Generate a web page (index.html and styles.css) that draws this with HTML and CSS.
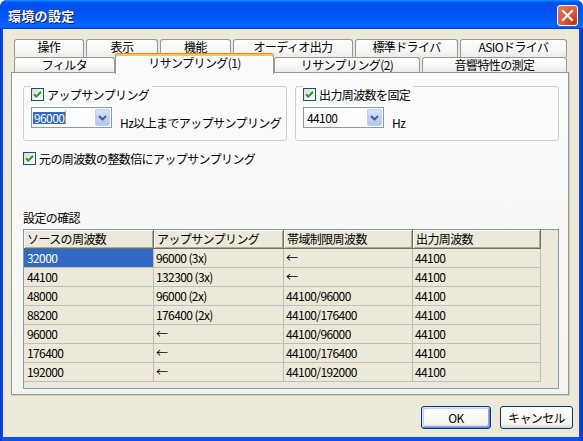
FILE: index.html
```html
<!DOCTYPE html>
<html lang="ja">
<head>
  <meta charset="UTF-8">
  <title>環境の設定</title>
  <link rel="stylesheet" href="styles.css">
</head>
<body>

<div class="window">
  <!-- title bar -->
  <div class="titlebar">
    <span class="title">環境の設定</span>
    <span class="close">
      <svg width="19" height="19" viewBox="0 0 19 19"><path d="M5 5 L14 14 M14 5 L5 14" stroke="#fff" stroke-width="2.2" stroke-linecap="square"/></svg>
    </span>
  </div>

  <div class="client">
    <!-- tabs, two rows -->
    <div class="tabs">
      <div class="tabrow">
        <div class="tab w70">操作</div>
        <div class="tab w72">表示</div>
        <div class="tab w71">機能</div>
        <div class="tab w120">オーディオ出力</div>
        <div class="tab w103">標準ドライバ</div>
        <div class="tab w107">ASIOドライバ</div>
      </div>
      <div class="tabrow row2">
        <div class="tab w101">フィルタ</div>
        <div class="tab sel w159">リサンプリング(1)</div>
        <div class="tab w146">リサンプリング(2)</div>
        <div class="tab w145 gapl">音響特性の測定</div>
      </div>
    </div>

    <div class="panel">
      <div class="groups">
        <div class="group">
          <div class="legend">
            <span class="cb"><svg width="11" height="11" viewBox="0 0 11 11"><path d="M2 5.2 L4.3 7.6 L9 2.8" fill="none" stroke="#21A121" stroke-width="2"/></svg></span>
            <span>アップサンプリング</span>
          </div>
          <div class="field">
            <div class="combo">
              <span class="val"><span class="hl">96000</span><span class="caret"></span></span>
              <span class="drop"><svg width="9" height="6" viewBox="0 0 9 6"><path d="M1 1 L4.5 4.5 L8 1" fill="none" stroke="#4D6185" stroke-width="2"/></svg></span>
            </div>
            <span class="hz">Hz以上までアップサンプリング</span>
          </div>
        </div>
        <div class="group">
          <div class="legend">
            <span class="cb"><svg width="11" height="11" viewBox="0 0 11 11"><path d="M2 5.2 L4.3 7.6 L9 2.8" fill="none" stroke="#21A121" stroke-width="2"/></svg></span>
            <span>出力周波数を固定</span>
          </div>
          <div class="field">
            <div class="combo">
              <span class="val plain">44100</span>
              <span class="drop"><svg width="9" height="6" viewBox="0 0 9 6"><path d="M1 1 L4.5 4.5 L8 1" fill="none" stroke="#4D6185" stroke-width="2"/></svg></span>
            </div>
            <span class="hz">Hz</span>
          </div>
        </div>
      </div>

      <div class="check-row">
        <span class="cb"><svg width="11" height="11" viewBox="0 0 11 11"><path d="M2 5.2 L4.3 7.6 L9 2.8" fill="none" stroke="#21A121" stroke-width="2"/></svg></span>
        <span>元の周波数の整数倍にアップサンプリング</span>
      </div>

      <div class="caption">設定の確認</div>

      <div class="listview">
        <table>
          <thead>
            <tr><th class="c1">ソースの周波数</th><th class="c2">アップサンプリング</th><th class="c3">帯域制限周波数</th><th class="c4">出力周波数</th></tr>
          </thead>
          <tbody>
            <tr><td class="picked">32000</td><td>96000 (3x)</td><td>←</td><td>44100</td></tr>
            <tr><td>44100</td><td>132300 (3x)</td><td>←</td><td>44100</td></tr>
            <tr><td>48000</td><td>96000 (2x)</td><td>44100/96000</td><td>44100</td></tr>
            <tr><td>88200</td><td>176400 (2x)</td><td>44100/176400</td><td>44100</td></tr>
            <tr><td>96000</td><td>←</td><td>44100/96000</td><td>44100</td></tr>
            <tr><td>176400</td><td>←</td><td>44100/176400</td><td>44100</td></tr>
            <tr><td>192000</td><td>←</td><td>44100/192000</td><td>44100</td></tr>
          </tbody>
        </table>
      </div>
    </div>

    <div class="buttons">
      <button class="btn ok">OK</button>
      <button class="btn cancel">キャンセル</button>
    </div>
  </div>
</div>

</body>
</html>
```

FILE: styles.css
```css
* { box-sizing: border-box; }
body { margin: 0; background: #fff; font-family: "Noto Sans CJK JP", sans-serif; font-size: 12px; color: #000; letter-spacing: -0.6px; }

.window { width: 583px; height: 441px; display: flex; flex-direction: column; background: linear-gradient(90deg, #0831D9, #0A55E8 3px, #0A55E8 578px, #0831D9); border-radius: 7px 7px 0 0; overflow: hidden; }
.titlebar { height: 29px; flex: none; display: flex; align-items: center; justify-content: space-between; padding: 1px 5px 0 8px;
  background: linear-gradient(180deg, #0997ff, #0053ee 8%, #0050ee 40%, #06f 88%, #06f 93%, #005bff 95%, #003dd7 96%, #003dd7); }
.title { color: #fff; font-weight: bold; font-size: 13px; text-shadow: 1px 1px #0F1089; letter-spacing: 0.3px; }
.close { width: 21px; height: 21px; border: 1px solid #fff; border-radius: 3px; display: flex; align-items: center; justify-content: center;
  background: radial-gradient(circle at 85% 85%, #C1360E 0, #DA5A32 45%, #E67A5C 100%); }

.client { flex: 1; margin: 0 4px 4px 3px; background: #ECE9D8; padding: 10px 0 0 8px; }

/* tabs */
.tabs { width: 558px; padding-left: 3px; }
.tabrow { display: flex; gap: 2px; height: 18px; }
.tab { height: 18px; border: 1px solid #919B9C; border-bottom: none; border-radius: 3px 3px 0 0; text-align: center; line-height: 14px; white-space: nowrap;
  background: linear-gradient(#FFFFFF, #F7F7F4 55%, #ECEBE6); }
.row2 { gap: 0; height: 15px; }
.row2 .tab { height: 15px; line-height: 13px; }
.row2 .tab.sel { position: relative; z-index: 1; height: 21px; margin-top: -4px; line-height: 15px; padding-top: 1px; background: #FCFCFE;
  border-top-color: #E68B2C; box-shadow: inset 0 2px 0 #FFC73C; }
.gapl { margin-left: 2px; }
.w70 { width: 70px; } .w71 { width: 71px; } .w72 { width: 72px; } .w120 { width: 120px; } .w103 { width: 103px; } .w107 { width: 107px; }
.w101 { width: 101px; } .w159 { width: 159px; } .w146 { width: 146px; } .w145 { width: 145px; }

.panel { width: 558px; height: 323px; border: 1px solid #919B9C; background: linear-gradient(#FCFCFE, #F4F3EE); padding: 13px 9px 0 11px;
  box-shadow: 1px 1px 0 #D0CEBF; }

.groups { display: flex; gap: 8px; }
.group { position: relative; width: 264px; height: 55px; border: 1px solid #D0D0BF; border-radius: 3px; padding: 20px 0 0 7px; }
.legend { position: absolute; top: -1px; left: 7px; display: flex; align-items: center; gap: 3px; padding: 2px 3px 0 0; background: #FCFCFE; line-height: 13px; }

.cb { width: 13px; height: 13px; flex: none; border: 1px solid #1C5180; background: linear-gradient(135deg, #DCDCD7, #FFFFFF); display: flex; align-items: center; justify-content: center; }

.field { display: flex; align-items: flex-start; gap: 8px; white-space: nowrap; }
.combo { width: 81px; height: 21px; border: 1px solid #7F9DB9; background: #fff; display: flex; align-items: center; padding: 0 1px; }
.val { flex: 1; display: flex; align-items: center; line-height: 12px; }
.val.plain { padding-left: 2px; }
.hl { background: #316AC5; color: #fff; padding: 0 1px; }
.caret { width: 1px; height: 13px; background: #E68B2C; }
.drop { width: 15px; height: 17px; border-radius: 2px; border: 1px solid #B9CDF5; background: linear-gradient(#D6E3FD, #C0D2FA 50%, #B1C6F5); display: flex; align-items: center; justify-content: center; }
.hz { margin-top: 9px; line-height: 13px; }

.check-row { display: flex; align-items: center; gap: 3px; margin-top: 11px; line-height: 13px; }
.caption { margin-top: 46px; line-height: 13px; height: 18px; }

/* list view */
.listview { width: 536px; height: 160px; border: 1px solid #7F9DB9; background: #ECE9D8; }
.listview table { border-collapse: separate; border-spacing: 0; table-layout: fixed; width: 517px; }
.listview th, .listview td { height: 19px; padding: 0 0 0 2px; text-align: left; font-weight: normal; white-space: nowrap; line-height: 18px; }
.listview th { background: #ECE9D8; border-right: 1px solid #716F64; border-bottom: 1px solid #716F64; box-shadow: inset 1px 1px #fff, inset -1px -1px #ACA899; padding-left: 3px; }
.listview td { border-right: 1px solid #BDBDBD; border-bottom: 1px solid #BDBDBD; }
.listview td:first-child { padding-left: 3px; }
.c1 { width: 130px; } .c2 { width: 130px; } .c3 { width: 129px; } .c4 { width: 128px; }
.listview td.picked { background: #316AC5; color: #fff; }

.buttons { display: flex; justify-content: flex-end; gap: 9px; margin-top: 11px; padding-right: 6px; }
.btn { height: 23px; border: 1px solid #003C74; border-radius: 3px; background: linear-gradient(#FFFFFF, #F4F4F0 80%, #D8D2C6); font-family: "Noto Sans CJK JP", sans-serif; font-size: 12px; color: #000; padding: 0; letter-spacing: -0.6px; }
.ok { width: 70px; box-shadow: inset 1px 1px #CEE7FF, inset -1px -1px #6982EE, inset 2px 2px #BCD4F6, inset -2px -2px #89ADE4; }
.cancel { width: 73px; }
```
